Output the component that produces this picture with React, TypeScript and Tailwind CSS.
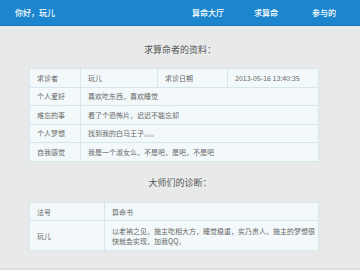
export default function App() {
  const font = { fontFamily: '"Noto Sans CJK SC", "Noto Sans", sans-serif' }
  const cell = 'border border-[#d6e7eb] px-[7px] align-middle'

  return (
    <div className="w-[360px] h-[270px] overflow-hidden bg-[#e8eaea] text-[#666]" style={font}>
      {/* header */}
      <div className="h-[26px] bg-[#1b86cd] border-b border-[#1a78b8] flex items-center text-white text-[8px] font-medium">
        <div className="pl-[15px] flex-1">你好，玩儿</div>
        <div className="flex pr-[7px]">
          <div className="w-[58px] text-center">算命大厅</div>
          <div className="w-[58px] text-center">求算命</div>
          <div className="w-[58px] text-center">参与的</div>
        </div>
      </div>

      <div className="mt-[18px] h-[12px] leading-[12px] text-center text-[9px] text-[#555]">求算命者的资料：</div>

      <table className="mt-[12px] ml-[29px] w-[289px] border-collapse bg-[#f3f9fa] text-[7px] leading-[9px] table-fixed">
        <colgroup>
          <col className="w-[51px]" />
          <col className="w-[77px]" />
          <col className="w-[70px]" />
          <col className="w-[91px]" />
        </colgroup>
        <tbody>
          <tr className="h-[19px]">
            <td className={cell}>求诊者</td>
            <td className={cell}>玩儿</td>
            <td className={cell}>求诊日期</td>
            <td className={cell}>2013-05-16 13:40:35</td>
          </tr>
          <tr className="h-[18px]">
            <td className={cell}>个人爱好</td>
            <td className={cell} colSpan={3}>喜欢吃东西，喜欢睡觉</td>
          </tr>
          <tr className="h-[19px]">
            <td className={cell}>难忘的事</td>
            <td className={cell} colSpan={3}>看了个恐怖片，迟迟不能忘却</td>
          </tr>
          <tr className="h-[18px]">
            <td className={cell}>个人梦想</td>
            <td className={cell} colSpan={3}>找到我的白马王子。。。</td>
          </tr>
          <tr className="h-[19px]">
            <td className={cell}>自我感觉</td>
            <td className={cell} colSpan={3}>我是一个淑女么，不是吧，是吧，不是吧</td>
          </tr>
        </tbody>
      </table>

      <div className="mt-[15px] h-[12px] leading-[12px] text-center text-[9px] text-[#555]">大师们的诊断：</div>

      <table className="mt-[13px] ml-[29px] w-[289px] border-collapse bg-[#f3f9fa] text-[7px] leading-[10px] table-fixed">
        <colgroup>
          <col className="w-[75px]" />
          <col className="w-[214px]" />
        </colgroup>
        <tbody>
          <tr className="h-[18px]">
            <td className={cell}>法号</td>
            <td className={cell}>算命书</td>
          </tr>
          <tr className="h-[30px]">
            <td className={cell}>玩儿</td>
            <td className="border border-[#d6e7eb] pl-[7px] pr-[2px] align-middle">以老衲之见，施主吃相大方，睡觉稳重，实乃贵人。施主的梦想很快就会实现，加我QQ。</td>
          </tr>
        </tbody>
      </table>

      {/* footer strip */}
      <div className="mt-[17px] h-[4px] bg-[#dcdede] flex">
        <div className="w-[52px] border-r border-[#e8eaea]" />
        <div className="w-[120px] border-r border-[#e8eaea]" />
        <div className="w-[120px] border-r border-[#e8eaea]" />
        <div className="flex-1" />
      </div>
    </div>
  )
}
